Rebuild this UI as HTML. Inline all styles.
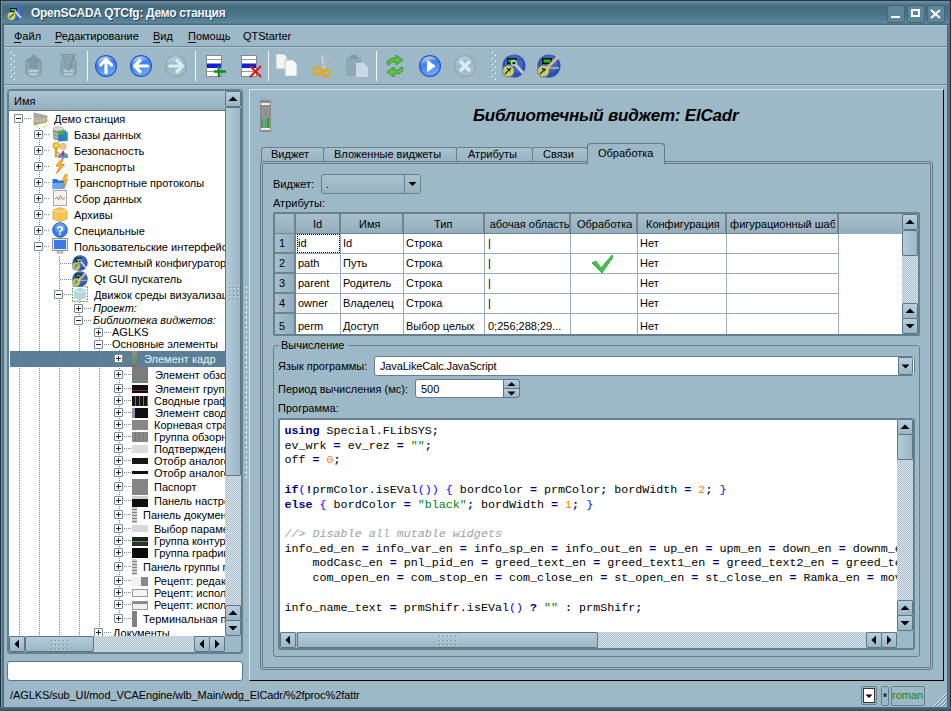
<!DOCTYPE html><html><head><meta charset="utf-8"><style>
*{margin:0;padding:0;box-sizing:border-box}
html,body{width:951px;height:711px;overflow:hidden;background:#9db8c6;font:11px 'Liberation Sans', sans-serif;color:#000}
.a{position:absolute}
.t{position:absolute;white-space:pre;line-height:13px;font:11px/13px 'Liberation Sans', sans-serif}
.m{position:absolute;white-space:pre;font:11.7px/14.72px 'Liberation Mono', monospace}
.chk{background-color:#c4d4de;background-image:repeating-conic-gradient(#a6bccb 0 25%, #dfe8ee 0 50%);background-size:2px 2px}
.btn{background:linear-gradient(#b8d0de,#9ab5c5);border:1px solid #5d7686;border-radius:2px}
.hdl{background:linear-gradient(90deg,#b4ccda,#9cb6c6);border:1px solid #5d7686;border-radius:2px}
.hdlh{background:linear-gradient(#b4ccda,#9cb6c6);border:1px solid #5d7686;border-radius:2px}
.frame{border:2px solid #667e8e;border-radius:3px}
</style></head><body>
<div class="a" style="left:0px;top:0px;width:951px;height:25px;background:linear-gradient(#25343e 0 1px,#6a8ea2 1px 2px,#587f94 3px,#466b7f 7px,#4d7388 15px,#5a87a0 23px,#4a6b7e 24px)"></div>
<div class="a" style="left:0px;top:0px;width:1px;height:711px;background:#23333d"></div>
<div class="a" style="left:1px;top:1px;width:1px;height:710px;background:#6c92a8"></div>
<div class="a" style="left:2px;top:25px;width:1px;height:682px;background:#567c92"></div>
<div class="a" style="left:3px;top:25px;width:1px;height:682px;background:#466b80"></div>
<div class="a" style="left:947px;top:25px;width:1px;height:682px;background:#466b80"></div>
<div class="a" style="left:948px;top:25px;width:1px;height:682px;background:#567c92"></div>
<div class="a" style="left:949px;top:1px;width:1px;height:710px;background:#4a6f85"></div>
<div class="a" style="left:950px;top:0px;width:1px;height:711px;background:#23333d"></div>
<div class="a" style="left:0px;top:707px;width:951px;height:4px;background:linear-gradient(#4f7489,#3d6074 2px,#2f4c5e)"></div>
<svg class="a" style="left:7px;top:5px" width="16" height="16" viewBox="0 0 16 16">
<circle cx="8" cy="8" r="7.5" fill="#3560c0"/><circle cx="8" cy="6" r="6" fill="#4a7ad8" opacity=".6"/>
<rect x="3" y="3" width="7" height="4" fill="#111"/><rect x="4" y="4" width="5" height="2" fill="#2c2"/>
<circle cx="4.5" cy="11" r="4" fill="#c8d070"/><path d="M2 13 L7 9" stroke="#222" stroke-width="1"/>
<path d="M8 6 L14 13" stroke="#ccc" stroke-width="2.2"/></svg>
<div class="a" style="left:31px;top:6px;white-space:pre;font:bold 12px/14px 'Liberation Sans', sans-serif;letter-spacing:-0.3px;color:#f4f8fa;text-shadow:1px 1px 0 #2a4050">OpenSCADA QTCfg: Демо станция</div>
<div class="a" style="left:887px;top:5px;width:18px;height:18px;background:#5f8599;border:1px solid #44677b;border-radius:3px"></div>
<div class="a" style="left:907px;top:5px;width:18px;height:18px;background:#5f8599;border:1px solid #44677b;border-radius:3px"></div>
<div class="a" style="left:927px;top:5px;width:18px;height:18px;background:#5f8599;border:1px solid #44677b;border-radius:3px"></div>
<div class="a" style="left:891px;top:16px;width:9px;height:2px;background:#fff"></div>
<div class="a" style="left:911px;top:9px;width:9px;height:8px;border:2px solid #fff;border-top-width:2px"></div>
<svg class="a" style="left:930px;top:9px" width="11" height="10"><path d="M1 1 L10 9 M10 1 L1 9" stroke="#fff" stroke-width="2"/></svg>
<div class="a" style="left:4px;top:25px;width:943px;height:1px;background:#b4cad6"></div>
<div class="t" style="left:14px;top:30px;">Файл</div>
<div class="t" style="left:55px;top:30px;">Редактирование</div>
<div class="t" style="left:153px;top:30px;">Вид</div>
<div class="t" style="left:188px;top:30px;">Помощь</div>
<div class="t" style="left:243px;top:30px;">QTStarter</div>
<div class="a" style="left:14px;top:42px;width:7px;height:1px;background:#000"></div>
<div class="a" style="left:55px;top:42px;width:7px;height:1px;background:#000"></div>
<div class="a" style="left:153px;top:42px;width:7px;height:1px;background:#000"></div>
<div class="a" style="left:188px;top:42px;width:8px;height:1px;background:#000"></div>
<div class="a" style="left:4px;top:46px;width:943px;height:1px;background:#72889a"></div>
<div class="a" style="left:4px;top:47px;width:943px;height:1px;background:#b2c8d4"></div>
<div class="a" style="left:10px;top:51px;width:2px;height:2px;background:#cde8f6"></div>
<div class="a" style="left:10px;top:51px;width:1px;height:1px;background:#7a92a2"></div>
<div class="a" style="left:13px;top:54px;width:2px;height:2px;background:#cde8f6"></div>
<div class="a" style="left:13px;top:54px;width:1px;height:1px;background:#7a92a2"></div>
<div class="a" style="left:10px;top:57px;width:2px;height:2px;background:#cde8f6"></div>
<div class="a" style="left:10px;top:57px;width:1px;height:1px;background:#7a92a2"></div>
<div class="a" style="left:13px;top:60px;width:2px;height:2px;background:#cde8f6"></div>
<div class="a" style="left:13px;top:60px;width:1px;height:1px;background:#7a92a2"></div>
<div class="a" style="left:10px;top:63px;width:2px;height:2px;background:#cde8f6"></div>
<div class="a" style="left:10px;top:63px;width:1px;height:1px;background:#7a92a2"></div>
<div class="a" style="left:13px;top:66px;width:2px;height:2px;background:#cde8f6"></div>
<div class="a" style="left:13px;top:66px;width:1px;height:1px;background:#7a92a2"></div>
<div class="a" style="left:10px;top:69px;width:2px;height:2px;background:#cde8f6"></div>
<div class="a" style="left:10px;top:69px;width:1px;height:1px;background:#7a92a2"></div>
<div class="a" style="left:13px;top:72px;width:2px;height:2px;background:#cde8f6"></div>
<div class="a" style="left:13px;top:72px;width:1px;height:1px;background:#7a92a2"></div>
<div class="a" style="left:10px;top:75px;width:2px;height:2px;background:#cde8f6"></div>
<div class="a" style="left:10px;top:75px;width:1px;height:1px;background:#7a92a2"></div>
<div class="a" style="left:13px;top:78px;width:2px;height:2px;background:#cde8f6"></div>
<div class="a" style="left:13px;top:78px;width:1px;height:1px;background:#7a92a2"></div>
<div class="a" style="left:491px;top:51px;width:2px;height:2px;background:#cde8f6"></div>
<div class="a" style="left:491px;top:51px;width:1px;height:1px;background:#7a92a2"></div>
<div class="a" style="left:494px;top:54px;width:2px;height:2px;background:#cde8f6"></div>
<div class="a" style="left:494px;top:54px;width:1px;height:1px;background:#7a92a2"></div>
<div class="a" style="left:491px;top:57px;width:2px;height:2px;background:#cde8f6"></div>
<div class="a" style="left:491px;top:57px;width:1px;height:1px;background:#7a92a2"></div>
<div class="a" style="left:494px;top:60px;width:2px;height:2px;background:#cde8f6"></div>
<div class="a" style="left:494px;top:60px;width:1px;height:1px;background:#7a92a2"></div>
<div class="a" style="left:491px;top:63px;width:2px;height:2px;background:#cde8f6"></div>
<div class="a" style="left:491px;top:63px;width:1px;height:1px;background:#7a92a2"></div>
<div class="a" style="left:494px;top:66px;width:2px;height:2px;background:#cde8f6"></div>
<div class="a" style="left:494px;top:66px;width:1px;height:1px;background:#7a92a2"></div>
<div class="a" style="left:491px;top:69px;width:2px;height:2px;background:#cde8f6"></div>
<div class="a" style="left:491px;top:69px;width:1px;height:1px;background:#7a92a2"></div>
<div class="a" style="left:494px;top:72px;width:2px;height:2px;background:#cde8f6"></div>
<div class="a" style="left:494px;top:72px;width:1px;height:1px;background:#7a92a2"></div>
<div class="a" style="left:491px;top:75px;width:2px;height:2px;background:#cde8f6"></div>
<div class="a" style="left:491px;top:75px;width:1px;height:1px;background:#7a92a2"></div>
<div class="a" style="left:494px;top:78px;width:2px;height:2px;background:#cde8f6"></div>
<div class="a" style="left:494px;top:78px;width:1px;height:1px;background:#7a92a2"></div>
<div class="a" style="left:87px;top:51px;width:1px;height:30px;background:#f0f6fa"></div>
<div class="a" style="left:195px;top:51px;width:1px;height:30px;background:#f0f6fa"></div>
<div class="a" style="left:268px;top:51px;width:1px;height:30px;background:#f0f6fa"></div>
<div class="a" style="left:376px;top:51px;width:1px;height:30px;background:#f0f6fa"></div>
<div class="a" style="left:4px;top:84px;width:943px;height:1px;background:#72889a"></div>
<div class="a" style="left:4px;top:85px;width:943px;height:1px;background:#b2c8d4"></div>
<svg class="a" style="left:25px;top:54px" width="17" height="24" viewBox="0 0 17 24"><path d="M1 7 L1 19 C1 23.5 16 23.5 16 19 L16 7 C16 3.5 1 3.5 1 7 Z" fill="#93abb8" stroke="#7a92a0" stroke-width="1"/>
<path d="M1.5 11 C3 14 14 14 15.5 11" fill="none" stroke="#7e96a4" stroke-width="1"/>
<path d="M1.5 15 C3 18 14 18 15.5 15" fill="none" stroke="#7e96a4" stroke-width="1"/>
<ellipse cx="8.5" cy="16.5" rx="5.5" ry="1.6" fill="#b4ccd8"/><ellipse cx="8.5" cy="20.5" rx="5" ry="1.4" fill="#b0c8d4"/>
<path d="M8.5 0.5 L15.5 8 L12 8 L12 15 L5 15 L5 8 L1.5 8 Z" fill="#8199a7" stroke="#7890a0" stroke-width=".6"/></svg>
<svg class="a" style="left:60px;top:54px" width="17" height="24" viewBox="0 0 17 24"><path d="M1 7 L1 19 C1 23.5 16 23.5 16 19 L16 7 C16 3.5 1 3.5 1 7 Z" fill="#93abb8" stroke="#7a92a0" stroke-width="1"/>
<path d="M1.5 11 C3 14 14 14 15.5 11" fill="none" stroke="#7e96a4" stroke-width="1"/>
<path d="M1.5 15 C3 18 14 18 15.5 15" fill="none" stroke="#7e96a4" stroke-width="1"/>
<ellipse cx="8.5" cy="16.5" rx="5.5" ry="1.6" fill="#b4ccd8"/><ellipse cx="8.5" cy="20.5" rx="5" ry="1.4" fill="#b0c8d4"/>
<path d="M1 0.5 L16 0.5 L12 7 L12 13 L8.5 17 L5 13 L5 7 Z" fill="#8aa2b0" stroke="#7890a0" stroke-width=".6"/><path d="M14 2 L9 16" stroke="#6f8794" stroke-width="1"/></svg>
<svg class="a" style="left:94px;top:54px" width="24" height="24" viewBox="0 0 24 24">
<defs><linearGradient id="g1" x1="0" y1="0" x2="0.3" y2="1"><stop offset="0" stop-color="#f0f6ff"/><stop offset=".45" stop-color="#3f7fea"/><stop offset="1" stop-color="#6ea6fa"/></linearGradient></defs>
<circle cx="12" cy="12" r="11" fill="#2456c8"/><circle cx="12" cy="12" r="9.8" fill="url(#g1)"/><path d="M12 18.5 L12 6 M6.5 11 L12 5.5 L17.5 11" fill="none" stroke="#ffffff" stroke-width="3.2" stroke-linecap="round" stroke-linejoin="round"/></svg>
<svg class="a" style="left:129px;top:54px" width="24" height="24" viewBox="0 0 24 24">
<defs><linearGradient id="g2" x1="0" y1="0" x2="0.3" y2="1"><stop offset="0" stop-color="#f0f6ff"/><stop offset=".45" stop-color="#3f7fea"/><stop offset="1" stop-color="#6ea6fa"/></linearGradient></defs>
<circle cx="12" cy="12" r="11" fill="#2456c8"/><circle cx="12" cy="12" r="9.8" fill="url(#g2)"/><path d="M18.5 12 L6 12 M11 6.5 L5.5 12 L11 17.5" fill="none" stroke="#ffffff" stroke-width="3.2" stroke-linecap="round" stroke-linejoin="round"/></svg>
<svg class="a" style="left:164px;top:54px" width="24" height="24" viewBox="0 0 24 24">
<defs><linearGradient id="g3" x1="0" y1="0" x2="0.3" y2="1"><stop offset="0" stop-color="#c4d8e2"/><stop offset=".5" stop-color="#9fb6c3"/><stop offset="1" stop-color="#a9c0cc"/></linearGradient></defs>
<circle cx="12" cy="12" r="11" fill="#8ea5b2"/><circle cx="12" cy="12" r="9.8" fill="url(#g3)"/><path d="M5.5 12 L18 12 M13 6.5 L18.5 12 L13 17.5" fill="none" stroke="#d8eef8" stroke-width="3.2" stroke-linecap="round" stroke-linejoin="round"/></svg>
<svg class="a" style="left:418px;top:54px" width="24" height="24" viewBox="0 0 24 24">
<defs><linearGradient id="g4" x1="0" y1="0" x2="0.3" y2="1"><stop offset="0" stop-color="#f0f6ff"/><stop offset=".45" stop-color="#3f7fea"/><stop offset="1" stop-color="#6ea6fa"/></linearGradient></defs>
<circle cx="12" cy="12" r="11" fill="#2456c8"/><circle cx="12" cy="12" r="9.8" fill="url(#g4)"/><path d="M9.5 6.5 L17 12 L9.5 17.5 Z" fill="#ffffff" stroke="#ffffff" stroke-width="1" stroke-linejoin="round"/></svg>
<svg class="a" style="left:453px;top:54px" width="24" height="24" viewBox="0 0 24 24">
<defs><linearGradient id="g5" x1="0" y1="0" x2="0.3" y2="1"><stop offset="0" stop-color="#c4d8e2"/><stop offset=".5" stop-color="#9fb6c3"/><stop offset="1" stop-color="#a9c0cc"/></linearGradient></defs>
<circle cx="12" cy="12" r="11" fill="#8ea5b2"/><circle cx="12" cy="12" r="9.8" fill="url(#g5)"/><path d="M8 8 L16 16 M16 8 L8 16" stroke="#d8eef8" stroke-width="3.4" stroke-linecap="round"/></svg>
<svg class="a" style="left:206px;top:55px" width="22" height="23" viewBox="0 0 22 23">
<rect x="0.5" y="0.5" width="15" height="21" fill="#fff" stroke="#888"/>
<rect x="1" y="4" width="14" height="1" fill="#999"/><rect x="1" y="8" width="14" height="1" fill="#999"/>
<rect x="1" y="9" width="14" height="4" fill="#1020e0"/><rect x="1" y="16" width="14" height="1" fill="#999"/><path d="M13 11 L13 22 M8 16.5 L20 16.5" stroke="#108a20" stroke-width="2.6"/></svg>
<svg class="a" style="left:241px;top:55px" width="22" height="23" viewBox="0 0 22 23">
<rect x="0.5" y="0.5" width="15" height="21" fill="#fff" stroke="#888"/>
<rect x="1" y="4" width="14" height="1" fill="#999"/><rect x="1" y="8" width="14" height="1" fill="#999"/>
<rect x="1" y="9" width="14" height="4" fill="#1020e0"/><rect x="1" y="16" width="14" height="1" fill="#999"/><path d="M9 11 L20 22 M20 11 L9 22" stroke="#e01818" stroke-width="2.2"/></svg>
<svg class="a" style="left:275px;top:54px" width="24" height="24" viewBox="0 0 24 24">
<path d="M1 0 L9 0 L12 3 L12 15 L1 15 Z" fill="#f4f4f4" stroke="#b8b8b8" stroke-width=".8"/>
<path d="M10 6 L18 6 L22 10 L22 22 L10 22 Z" fill="#f8f8f8" stroke="#b8b8b8" stroke-width=".8"/></svg>
<svg class="a" style="left:311px;top:54px" width="22" height="24" viewBox="0 0 22 24">
<path d="M11 1 L13 15" stroke="#d0d0d0" stroke-width="2"/><path d="M20 2 L9 14" stroke="#b8b8b8" stroke-width="2"/>
<circle cx="6" cy="17" r="3.6" fill="none" stroke="#e8a800" stroke-width="2.2"/><circle cx="15" cy="19" r="3.6" fill="none" stroke="#e8a800" stroke-width="2.2"/></svg>
<svg class="a" style="left:345px;top:54px" width="24" height="24" viewBox="0 0 24 24">
<rect x="1" y="3" width="15" height="19" rx="2" fill="#8ea8b6"/><rect x="5" y="1" width="7" height="4" rx="1" fill="#7e98a6"/>
<path d="M11 9 L19 9 L23 13 L23 23 L11 23 Z" fill="#c8dae4"/></svg>
<svg class="a" style="left:383px;top:54px" width="24" height="24" viewBox="0 0 24 24">
<path d="M4 10 C4 5 8 4 13 4 L13 1 L20 6 L13 11 L13 8 C9 8 7 8 6 11 Z" fill="#60c040" stroke="#2a8a20" stroke-width=".8"/>
<path d="M20 14 C20 19 16 20 11 20 L11 23 L4 18 L11 13 L11 16 C15 16 17 16 18 13 Z" fill="#60c040" stroke="#2a8a20" stroke-width=".8"/></svg>
<svg class="a" style="left:502px;top:54px" width="24" height="24" viewBox="0 0 24 24">
<circle cx="12" cy="12" r="11.5" fill="#2d50b8"/><circle cx="12" cy="10" r="9" fill="#4a78d8" opacity=".55"/>
<rect x="5" y="4" width="10" height="6" fill="#111"/><rect x="6.5" y="5.5" width="7" height="3" fill="#20c020"/>
<circle cx="6.5" cy="17" r="6" fill="#c4cc70" stroke="#333" stroke-width=".5"/><path d="M3 20 L9 14 M5 14 L8 17" stroke="#222" stroke-width="1.2"/><path d="M13 10 L21 19" stroke="#c8c8c8" stroke-width="3"/><circle cx="12" cy="9" r="2.5" fill="none" stroke="#c8c8c8" stroke-width="1.5"/></svg>
<svg class="a" style="left:537px;top:54px" width="24" height="24" viewBox="0 0 24 24">
<circle cx="12" cy="12" r="11.5" fill="#2d50b8"/><circle cx="12" cy="10" r="9" fill="#4a78d8" opacity=".55"/>
<rect x="5" y="4" width="10" height="6" fill="#111"/><rect x="6.5" y="5.5" width="7" height="3" fill="#20c020"/>
<circle cx="6.5" cy="17" r="6" fill="#c4cc70" stroke="#333" stroke-width=".5"/><path d="M3 20 L9 14 M5 14 L8 17" stroke="#222" stroke-width="1.2"/><path d="M9 15 L21 3" stroke="#d8b890" stroke-width="3"/><path d="M9 14 L22 14" stroke="#e0e060" stroke-width="1.2"/></svg>
<div class="a" style="left:7px;top:89px;width:236px;height:565px;border:2px solid #667e8e;border-radius:4px;background:#9db8c6"></div>
<div class="a" style="left:9px;top:91px;width:216px;height:20px;background:linear-gradient(#adc6d4,#93adbd);border-bottom:1px solid #5d7686"></div>
<div class="t" style="left:14px;top:95px;">Имя</div>
<div class="a" style="left:9px;top:111px;width:216px;height:525px;background:#fff"></div>
<div class="a" style="left:225px;top:91px;width:16px;height:545px;background:#9db8c6"></div>
<div class="a" style="left:225px;top:476px;width:16px;height:129px;"></div>
<div class="a chk" style="left:225px;top:476px;width:16px;height:129px"></div>
<div class="a btn" style="left:225px;top:91px;width:16px;height:16px"></div>
<svg class="a" style="left:225px;top:91px" width="16" height="16"><path d="M3.5 10.0 L12.5 10.0 L8.0 5.5 Z" fill="#000"/></svg>
<div class="a hdl" style="left:225px;top:107px;width:16px;height:369px"></div>
<div class="a" style="left:229px;top:283px;width:1px;height:1px;background:#6c8494"></div>
<div class="a" style="left:230px;top:284px;width:1px;height:1px;background:#d0e2ec"></div>
<div class="a" style="left:233px;top:283px;width:1px;height:1px;background:#6c8494"></div>
<div class="a" style="left:234px;top:284px;width:1px;height:1px;background:#d0e2ec"></div>
<div class="a" style="left:237px;top:283px;width:1px;height:1px;background:#6c8494"></div>
<div class="a" style="left:238px;top:284px;width:1px;height:1px;background:#d0e2ec"></div>
<div class="a" style="left:229px;top:287px;width:1px;height:1px;background:#6c8494"></div>
<div class="a" style="left:230px;top:288px;width:1px;height:1px;background:#d0e2ec"></div>
<div class="a" style="left:233px;top:287px;width:1px;height:1px;background:#6c8494"></div>
<div class="a" style="left:234px;top:288px;width:1px;height:1px;background:#d0e2ec"></div>
<div class="a" style="left:237px;top:287px;width:1px;height:1px;background:#6c8494"></div>
<div class="a" style="left:238px;top:288px;width:1px;height:1px;background:#d0e2ec"></div>
<div class="a" style="left:229px;top:291px;width:1px;height:1px;background:#6c8494"></div>
<div class="a" style="left:230px;top:292px;width:1px;height:1px;background:#d0e2ec"></div>
<div class="a" style="left:233px;top:291px;width:1px;height:1px;background:#6c8494"></div>
<div class="a" style="left:234px;top:292px;width:1px;height:1px;background:#d0e2ec"></div>
<div class="a" style="left:237px;top:291px;width:1px;height:1px;background:#6c8494"></div>
<div class="a" style="left:238px;top:292px;width:1px;height:1px;background:#d0e2ec"></div>
<div class="a" style="left:229px;top:295px;width:1px;height:1px;background:#6c8494"></div>
<div class="a" style="left:230px;top:296px;width:1px;height:1px;background:#d0e2ec"></div>
<div class="a" style="left:233px;top:295px;width:1px;height:1px;background:#6c8494"></div>
<div class="a" style="left:234px;top:296px;width:1px;height:1px;background:#d0e2ec"></div>
<div class="a" style="left:237px;top:295px;width:1px;height:1px;background:#6c8494"></div>
<div class="a" style="left:238px;top:296px;width:1px;height:1px;background:#d0e2ec"></div>
<div class="a" style="left:229px;top:299px;width:1px;height:1px;background:#6c8494"></div>
<div class="a" style="left:230px;top:300px;width:1px;height:1px;background:#d0e2ec"></div>
<div class="a" style="left:233px;top:299px;width:1px;height:1px;background:#6c8494"></div>
<div class="a" style="left:234px;top:300px;width:1px;height:1px;background:#d0e2ec"></div>
<div class="a" style="left:237px;top:299px;width:1px;height:1px;background:#6c8494"></div>
<div class="a" style="left:238px;top:300px;width:1px;height:1px;background:#d0e2ec"></div>
<div class="a btn" style="left:225px;top:605px;width:16px;height:16px"></div>
<svg class="a" style="left:225px;top:605px" width="16" height="16"><path d="M3.5 10.0 L12.5 10.0 L8.0 5.5 Z" fill="#000"/></svg>
<div class="a btn" style="left:225px;top:620px;width:16px;height:16px"></div>
<svg class="a" style="left:225px;top:620px" width="16" height="16"><path d="M3.5 6.0 L12.5 6.0 L8.0 10.5 Z" fill="#000"/></svg>
<div class="a" style="left:9px;top:636px;width:216px;height:16px;background:#9db8c6"></div>
<div class="a chk" style="left:94px;top:636px;width:100px;height:16px"></div>
<div class="a btn" style="left:9px;top:636px;width:16px;height:16px"></div>
<svg class="a" style="left:9px;top:636px" width="16" height="16"><path d="M10.0 3.5 L10.0 12.5 L5.5 8.0 Z" fill="#000"/></svg>
<div class="a hdlh" style="left:25px;top:636px;width:69px;height:16px"></div>
<div class="a" style="left:51px;top:640px;width:1px;height:1px;background:#6c8494"></div>
<div class="a" style="left:52px;top:641px;width:1px;height:1px;background:#d0e2ec"></div>
<div class="a" style="left:55px;top:640px;width:1px;height:1px;background:#6c8494"></div>
<div class="a" style="left:56px;top:641px;width:1px;height:1px;background:#d0e2ec"></div>
<div class="a" style="left:59px;top:640px;width:1px;height:1px;background:#6c8494"></div>
<div class="a" style="left:60px;top:641px;width:1px;height:1px;background:#d0e2ec"></div>
<div class="a" style="left:63px;top:640px;width:1px;height:1px;background:#6c8494"></div>
<div class="a" style="left:64px;top:641px;width:1px;height:1px;background:#d0e2ec"></div>
<div class="a" style="left:67px;top:640px;width:1px;height:1px;background:#6c8494"></div>
<div class="a" style="left:68px;top:641px;width:1px;height:1px;background:#d0e2ec"></div>
<div class="a" style="left:51px;top:644px;width:1px;height:1px;background:#6c8494"></div>
<div class="a" style="left:52px;top:645px;width:1px;height:1px;background:#d0e2ec"></div>
<div class="a" style="left:55px;top:644px;width:1px;height:1px;background:#6c8494"></div>
<div class="a" style="left:56px;top:645px;width:1px;height:1px;background:#d0e2ec"></div>
<div class="a" style="left:59px;top:644px;width:1px;height:1px;background:#6c8494"></div>
<div class="a" style="left:60px;top:645px;width:1px;height:1px;background:#d0e2ec"></div>
<div class="a" style="left:63px;top:644px;width:1px;height:1px;background:#6c8494"></div>
<div class="a" style="left:64px;top:645px;width:1px;height:1px;background:#d0e2ec"></div>
<div class="a" style="left:67px;top:644px;width:1px;height:1px;background:#6c8494"></div>
<div class="a" style="left:68px;top:645px;width:1px;height:1px;background:#d0e2ec"></div>
<div class="a" style="left:51px;top:648px;width:1px;height:1px;background:#6c8494"></div>
<div class="a" style="left:52px;top:649px;width:1px;height:1px;background:#d0e2ec"></div>
<div class="a" style="left:55px;top:648px;width:1px;height:1px;background:#6c8494"></div>
<div class="a" style="left:56px;top:649px;width:1px;height:1px;background:#d0e2ec"></div>
<div class="a" style="left:59px;top:648px;width:1px;height:1px;background:#6c8494"></div>
<div class="a" style="left:60px;top:649px;width:1px;height:1px;background:#d0e2ec"></div>
<div class="a" style="left:63px;top:648px;width:1px;height:1px;background:#6c8494"></div>
<div class="a" style="left:64px;top:649px;width:1px;height:1px;background:#d0e2ec"></div>
<div class="a" style="left:67px;top:648px;width:1px;height:1px;background:#6c8494"></div>
<div class="a" style="left:68px;top:649px;width:1px;height:1px;background:#d0e2ec"></div>
<div class="a btn" style="left:194px;top:636px;width:16px;height:16px"></div>
<svg class="a" style="left:194px;top:636px" width="16" height="16"><path d="M10.0 3.5 L10.0 12.5 L5.5 8.0 Z" fill="#000"/></svg>
<div class="a btn" style="left:209px;top:636px;width:16px;height:16px"></div>
<svg class="a" style="left:209px;top:636px" width="16" height="16"><path d="M6.0 3.5 L6.0 12.5 L10.5 8.0 Z" fill="#000"/></svg>
<div class="a" style="left:0;top:0;width:951px;height:711px;clip-path:inset(111px 726px 75px 9px)">
<div class="a" style="left:10px;top:351px;width:215px;height:16px;background:#5a7f96"></div>
<div class="a" style="left:19px;top:124px;width:1px;height:512px;background:repeating-linear-gradient(#6f8494 0 1px,transparent 1px 2px)"></div>
<div class="a" style="left:39px;top:128px;width:1px;height:508px;background:repeating-linear-gradient(#6f8494 0 1px,transparent 1px 2px)"></div>
<div class="a" style="left:59px;top:256px;width:1px;height:380px;background:repeating-linear-gradient(#6f8494 0 1px,transparent 1px 2px)"></div>
<div class="a" style="left:79px;top:300px;width:1px;height:336px;background:repeating-linear-gradient(#6f8494 0 1px,transparent 1px 2px)"></div>
<div class="a" style="left:99px;top:326px;width:1px;height:310px;background:repeating-linear-gradient(#6f8494 0 1px,transparent 1px 2px)"></div>
<div class="a" style="left:119px;top:350px;width:1px;height:270px;background:repeating-linear-gradient(#6f8494 0 1px,transparent 1px 2px)"></div>
<div class="a" style="left:14px;top:114px;width:9px;height:9px;border:1px solid #7a8a94;border-radius:1px;background:#fff"></div>
<div class="a" style="left:16px;top:118px;width:5px;height:1px;background:#202020"></div>
<div class="a" style="left:24px;top:118px;width:7px;height:1px;background:repeating-linear-gradient(90deg,#6f8494 0 1px,transparent 1px 2px)"></div>
<div class="t" style="left:54px;top:113px;">Демо станция</div>
<svg class="a" style="left:33px;top:112px" width="16" height="16" viewBox="0 0 16 16"><path d="M1 1 L14 4 L14 10 L1 13 Z" fill="#a8a8a8" stroke="#888" stroke-width=".6"/><text x="7.5" y="9.5" font-size="5" font-family="Liberation Sans" fill="#e8e050" text-anchor="middle">AGLKS</text><path d="M3 13 L3 15 L6 15 M10 15 L13 15 L13 13" stroke="#e8e050" stroke-width="1" fill="none"/></svg>
<div class="a" style="left:34px;top:130px;width:9px;height:9px;border:1px solid #7a8a94;border-radius:1px;background:#fff"></div>
<div class="a" style="left:36px;top:134px;width:5px;height:1px;background:#202020"></div>
<div class="a" style="left:38px;top:132px;width:1px;height:5px;background:#202020"></div>
<div class="a" style="left:44px;top:134px;width:6px;height:1px;background:repeating-linear-gradient(90deg,#6f8494 0 1px,transparent 1px 2px)"></div>
<svg class="a" style="left:52px;top:126px" width="16" height="16" viewBox="0 0 16 16"><path d="M1 3 L1 12 C1 15 12 15 12 12 L12 3 Z" fill="#9a9a9a"/><ellipse cx="6.5" cy="3" rx="5.5" ry="2.2" fill="#d8d8d8" stroke="#888" stroke-width=".5"/><path d="M1 6.5 C2 9 11 9 12 6.5 M1 9.5 C2 12 11 12 12 9.5" fill="none" stroke="#c8c8c8" stroke-width="1"/><path d="M6 5 L14 4 L14 11 L6 12 Z" fill="#48b048"/><path d="M6 9 L15 8 L15 15 L6 15.5 Z" fill="#3a78c8"/><path d="M12 5 L16 6 L16 15 L12 15 Z" fill="#2a88b0" opacity=".8"/></svg>
<div class="t" style="left:74px;top:129px;">Базы данных</div>
<div class="a" style="left:34px;top:146px;width:9px;height:9px;border:1px solid #7a8a94;border-radius:1px;background:#fff"></div>
<div class="a" style="left:36px;top:150px;width:5px;height:1px;background:#202020"></div>
<div class="a" style="left:38px;top:148px;width:1px;height:5px;background:#202020"></div>
<div class="a" style="left:44px;top:150px;width:6px;height:1px;background:repeating-linear-gradient(90deg,#6f8494 0 1px,transparent 1px 2px)"></div>
<svg class="a" style="left:52px;top:142px" width="16" height="16" viewBox="0 0 16 16"><circle cx="11" cy="4.5" r="3.3" fill="#f0c890" stroke="#c89050" stroke-width=".5"/><path d="M6 15.5 C6 9 16 9 16 15.5 Z" fill="#5a90e0" stroke="#3a60b0" stroke-width=".5"/><rect x="10.3" y="9" width="1.6" height="5" fill="#e02020"/><circle cx="4" cy="3.5" r="3.2" fill="#f8c830" stroke="#c08a10" stroke-width=".6"/><circle cx="4" cy="3.5" r="1" fill="#fff6c0"/><path d="M3 6 L5 6 L5 15 L3 15 Z" fill="#f0b020" stroke="#c08a10" stroke-width=".5"/><rect x="5" y="10" width="2" height="1.3" fill="#e0a010"/></svg>
<div class="t" style="left:74px;top:145px;">Безопасность</div>
<div class="a" style="left:34px;top:162px;width:9px;height:9px;border:1px solid #7a8a94;border-radius:1px;background:#fff"></div>
<div class="a" style="left:36px;top:166px;width:5px;height:1px;background:#202020"></div>
<div class="a" style="left:38px;top:164px;width:1px;height:5px;background:#202020"></div>
<div class="a" style="left:44px;top:166px;width:6px;height:1px;background:repeating-linear-gradient(90deg,#6f8494 0 1px,transparent 1px 2px)"></div>
<svg class="a" style="left:52px;top:158px" width="16" height="16" viewBox="0 0 16 16"><path d="M10 0.5 L4 8 L8 8 L4.5 15.5 L12.5 6.5 L8.5 6.5 L11.5 0.5 Z" fill="#f8d020" stroke="#e06010" stroke-width=".8" stroke-linejoin="round"/></svg>
<div class="t" style="left:74px;top:161px;">Транспорты</div>
<div class="a" style="left:34px;top:178px;width:9px;height:9px;border:1px solid #7a8a94;border-radius:1px;background:#fff"></div>
<div class="a" style="left:36px;top:182px;width:5px;height:1px;background:#202020"></div>
<div class="a" style="left:38px;top:180px;width:1px;height:5px;background:#202020"></div>
<div class="a" style="left:44px;top:182px;width:6px;height:1px;background:repeating-linear-gradient(90deg,#6f8494 0 1px,transparent 1px 2px)"></div>
<svg class="a" style="left:52px;top:174px" width="16" height="16" viewBox="0 0 16 16"><path d="M0.5 5 L5 5 L6 6.5 L12 6.5 L12 15 L0.5 15 Z" fill="#2a70d8"/><path d="M1 9 L15 8.5 L12.5 15 L0.5 15 Z" fill="#68a8f8"/><path d="M13 0.5 L10 7 L12.5 7 L10.5 14 L16 5.5 L13.5 5.5 L15.5 0.5 Z" fill="#f8c020" stroke="#e07010" stroke-width=".6"/></svg>
<div class="t" style="left:74px;top:177px;">Транспортные протоколы</div>
<div class="a" style="left:34px;top:194px;width:9px;height:9px;border:1px solid #7a8a94;border-radius:1px;background:#fff"></div>
<div class="a" style="left:36px;top:198px;width:5px;height:1px;background:#202020"></div>
<div class="a" style="left:38px;top:196px;width:1px;height:5px;background:#202020"></div>
<div class="a" style="left:44px;top:198px;width:6px;height:1px;background:repeating-linear-gradient(90deg,#6f8494 0 1px,transparent 1px 2px)"></div>
<svg class="a" style="left:52px;top:190px" width="16" height="16" viewBox="0 0 16 16"><rect x="1.5" y="0.5" width="13" height="15" fill="#f4f4f4" stroke="#a8a8a8"/><path d="M3 9 L5 7 L6.5 10 L8.5 5.5 L10.5 9.5 L13 7.5" fill="none" stroke="#e07070" stroke-width="1"/></svg>
<div class="t" style="left:74px;top:193px;">Сбор данных</div>
<div class="a" style="left:34px;top:210px;width:9px;height:9px;border:1px solid #7a8a94;border-radius:1px;background:#fff"></div>
<div class="a" style="left:36px;top:214px;width:5px;height:1px;background:#202020"></div>
<div class="a" style="left:38px;top:212px;width:1px;height:5px;background:#202020"></div>
<div class="a" style="left:44px;top:214px;width:6px;height:1px;background:repeating-linear-gradient(90deg,#6f8494 0 1px,transparent 1px 2px)"></div>
<svg class="a" style="left:52px;top:206px" width="16" height="16" viewBox="0 0 16 16"><path d="M1 4 L8 1.5 L15 4 L15 13 L8 15.5 L1 13 Z" fill="#f8c850" stroke="#c8902a" stroke-width=".6"/><path d="M1 4 L8 6.2 L15 4" fill="none" stroke="#fff0b8" stroke-width="1"/><path d="M8 6.2 L8 15.5" stroke="#e0a838" stroke-width=".6"/></svg>
<div class="t" style="left:74px;top:209px;">Архивы</div>
<div class="a" style="left:34px;top:226px;width:9px;height:9px;border:1px solid #7a8a94;border-radius:1px;background:#fff"></div>
<div class="a" style="left:36px;top:230px;width:5px;height:1px;background:#202020"></div>
<div class="a" style="left:38px;top:228px;width:1px;height:5px;background:#202020"></div>
<div class="a" style="left:44px;top:230px;width:6px;height:1px;background:repeating-linear-gradient(90deg,#6f8494 0 1px,transparent 1px 2px)"></div>
<svg class="a" style="left:52px;top:222px" width="16" height="16" viewBox="0 0 16 16"><circle cx="8" cy="8" r="7.5" fill="#3a78e8" stroke="#2a58c0" stroke-width=".6"/><circle cx="8" cy="6" r="5" fill="#90c0ff" opacity=".5"/><text x="8" y="12.5" font-size="12" font-weight="bold" font-family="Liberation Sans" fill="#fff" text-anchor="middle">?</text></svg>
<div class="t" style="left:74px;top:225px;">Специальные</div>
<div class="a" style="left:34px;top:242px;width:9px;height:9px;border:1px solid #7a8a94;border-radius:1px;background:#fff"></div>
<div class="a" style="left:36px;top:246px;width:5px;height:1px;background:#202020"></div>
<div class="a" style="left:44px;top:246px;width:6px;height:1px;background:repeating-linear-gradient(90deg,#6f8494 0 1px,transparent 1px 2px)"></div>
<svg class="a" style="left:52px;top:238px" width="16" height="16" viewBox="0 0 16 16"><rect x="0.5" y="0.5" width="15" height="12" fill="#e8e8e8" stroke="#909090"/><rect x="2" y="2" width="12" height="9" fill="#3a78e8"/><rect x="5" y="13" width="6" height="2.5" fill="#c8c8c8" stroke="#999" stroke-width=".5"/></svg>
<div class="t" style="left:74px;top:241px;">Пользовательские интерфейсы</div>
<div class="a" style="left:60px;top:263px;width:11px;height:1px;background:repeating-linear-gradient(90deg,#6f8494 0 1px,transparent 1px 2px)"></div>
<svg class="a" style="left:72px;top:255px" width="16" height="16" viewBox="0 0 24 24">
<circle cx="12" cy="12" r="11.5" fill="#2d50b8"/><circle cx="12" cy="10" r="9" fill="#4a78d8" opacity=".55"/>
<rect x="5" y="4" width="10" height="6" fill="#111"/><rect x="6.5" y="5.5" width="7" height="3" fill="#20c020"/>
<circle cx="6.5" cy="17" r="6" fill="#c4cc70" stroke="#333" stroke-width=".5"/><path d="M3 20 L9 14 M5 14 L8 17" stroke="#222" stroke-width="1.2"/><path d="M13 10 L21 19" stroke="#c8c8c8" stroke-width="3"/><circle cx="12" cy="9" r="2.5" fill="none" stroke="#c8c8c8" stroke-width="1.5"/></svg>
<div class="t" style="left:94px;top:257px;">Системный конфигуратор</div>
<div class="a" style="left:60px;top:279px;width:11px;height:1px;background:repeating-linear-gradient(90deg,#6f8494 0 1px,transparent 1px 2px)"></div>
<svg class="a" style="left:72px;top:271px" width="16" height="16" viewBox="0 0 24 24">
<circle cx="12" cy="12" r="11.5" fill="#2d50b8"/><circle cx="12" cy="10" r="9" fill="#4a78d8" opacity=".55"/>
<rect x="5" y="4" width="10" height="6" fill="#111"/><rect x="6.5" y="5.5" width="7" height="3" fill="#20c020"/>
<circle cx="6.5" cy="17" r="6" fill="#c4cc70" stroke="#333" stroke-width=".5"/><path d="M3 20 L9 14 M5 14 L8 17" stroke="#222" stroke-width="1.2"/><path d="M9 15 L21 3" stroke="#d8b890" stroke-width="3"/><path d="M9 14 L22 14" stroke="#e0e060" stroke-width="1.2"/></svg>
<div class="t" style="left:94px;top:273px;">Qt GUI пускатель</div>
<div class="a" style="left:54px;top:290px;width:9px;height:9px;border:1px solid #7a8a94;border-radius:1px;background:#fff"></div>
<div class="a" style="left:56px;top:294px;width:5px;height:1px;background:#202020"></div>
<div class="a" style="left:64px;top:294px;width:7px;height:1px;background:repeating-linear-gradient(90deg,#6f8494 0 1px,transparent 1px 2px)"></div>
<svg class="a" style="left:72px;top:286px" width="16" height="16" viewBox="0 0 16 16"><rect x="0.5" y="0.5" width="15" height="15" fill="none" stroke="#30a030" stroke-dasharray="1.5 1.5"/><path d="M2 4 L8 1.5 L14 4 L14 12 L8 14.5 L2 12 Z" fill="#b8d8e0"/><path d="M2 4 L8 6.5 L14 4" fill="none" stroke="#e0f0f4"/></svg>
<div class="t" style="left:94px;top:289px;">Движок среды визуализации</div>
<div class="a" style="left:74px;top:304px;width:9px;height:9px;border:1px solid #7a8a94;border-radius:1px;background:#fff"></div>
<div class="a" style="left:76px;top:308px;width:5px;height:1px;background:#202020"></div>
<div class="a" style="left:78px;top:306px;width:1px;height:5px;background:#202020"></div>
<div class="a" style="left:84px;top:308px;width:7px;height:1px;background:repeating-linear-gradient(90deg,#6f8494 0 1px,transparent 1px 2px)"></div>
<div class="t" style="left:93px;top:302px;font-style:italic">Проект:</div>
<div class="a" style="left:74px;top:316px;width:9px;height:9px;border:1px solid #7a8a94;border-radius:1px;background:#fff"></div>
<div class="a" style="left:76px;top:320px;width:5px;height:1px;background:#202020"></div>
<div class="a" style="left:84px;top:320px;width:7px;height:1px;background:repeating-linear-gradient(90deg,#6f8494 0 1px,transparent 1px 2px)"></div>
<div class="t" style="left:93px;top:314px;font-style:italic">Библиотека виджетов:</div>
<div class="a" style="left:94px;top:328px;width:9px;height:9px;border:1px solid #7a8a94;border-radius:1px;background:#fff"></div>
<div class="a" style="left:96px;top:332px;width:5px;height:1px;background:#202020"></div>
<div class="a" style="left:98px;top:330px;width:1px;height:5px;background:#202020"></div>
<div class="a" style="left:104px;top:332px;width:7px;height:1px;background:repeating-linear-gradient(90deg,#6f8494 0 1px,transparent 1px 2px)"></div>
<div class="t" style="left:112px;top:326px;">AGLKS</div>
<div class="a" style="left:94px;top:340px;width:9px;height:9px;border:1px solid #7a8a94;border-radius:1px;background:#fff"></div>
<div class="a" style="left:96px;top:344px;width:5px;height:1px;background:#202020"></div>
<div class="a" style="left:104px;top:344px;width:7px;height:1px;background:repeating-linear-gradient(90deg,#6f8494 0 1px,transparent 1px 2px)"></div>
<div class="t" style="left:112px;top:338px;">Основные элементы</div>
<div class="a" style="left:94px;top:628px;width:9px;height:9px;border:1px solid #7a8a94;border-radius:1px;background:#fff"></div>
<div class="a" style="left:96px;top:632px;width:5px;height:1px;background:#202020"></div>
<div class="a" style="left:98px;top:630px;width:1px;height:5px;background:#202020"></div>
<div class="a" style="left:104px;top:632px;width:7px;height:1px;background:repeating-linear-gradient(90deg,#6f8494 0 1px,transparent 1px 2px)"></div>
<div class="t" style="left:113px;top:627px;">Документы</div>
<div class="a" style="left:114px;top:354px;width:9px;height:9px;border:1px solid #7a8a94;border-radius:1px;background:#fff"></div>
<div class="a" style="left:116px;top:358px;width:5px;height:1px;background:#202020"></div>
<div class="a" style="left:118px;top:356px;width:1px;height:5px;background:#202020"></div>
<div class="a" style="left:124px;top:358px;width:7px;height:1px;background:repeating-linear-gradient(90deg,#6f8494 0 1px,transparent 1px 2px)"></div>
<div class="a" style="left:132px;top:351px;width:5px;height:16px;background:linear-gradient(#909090,#707070)"></div><div class="a" style="left:133px;top:357px;width:3px;height:7px;background:#40b040"></div>
<div class="a" style="left:144px;top:353px;width:81px;height:14px;overflow:hidden"><div class="t" style="left:0;top:0;color:#e8f0f4">Элемент кадр</div></div>
<div class="a" style="left:114px;top:370px;width:9px;height:9px;border:1px solid #7a8a94;border-radius:1px;background:#fff"></div>
<div class="a" style="left:116px;top:374px;width:5px;height:1px;background:#202020"></div>
<div class="a" style="left:118px;top:372px;width:1px;height:5px;background:#202020"></div>
<div class="a" style="left:124px;top:374px;width:7px;height:1px;background:repeating-linear-gradient(90deg,#6f8494 0 1px,transparent 1px 2px)"></div>
<div class="a" style="left:132px;top:367px;width:16px;height:16px;background:linear-gradient(#7c7c7c 0 13px,#60a060 13px 14px,#7c7c7c 14px)"></div>
<div class="a" style="left:155px;top:369px;width:70px;height:14px;overflow:hidden"><div class="t" style="left:0;top:0;">Элемент обзор</div></div>
<div class="a" style="left:114px;top:384px;width:9px;height:9px;border:1px solid #7a8a94;border-radius:1px;background:#fff"></div>
<div class="a" style="left:116px;top:388px;width:5px;height:1px;background:#202020"></div>
<div class="a" style="left:118px;top:386px;width:1px;height:5px;background:#202020"></div>
<div class="a" style="left:124px;top:388px;width:7px;height:1px;background:repeating-linear-gradient(90deg,#6f8494 0 1px,transparent 1px 2px)"></div>
<div class="a" style="left:132px;top:385px;width:16px;height:8px;background:linear-gradient(#101010 0 5px,#a02020 5px 6px,#101010 6px)"></div>
<div class="a" style="left:155px;top:383px;width:70px;height:14px;overflow:hidden"><div class="t" style="left:0;top:0;">Элемент группы</div></div>
<div class="a" style="left:114px;top:396px;width:9px;height:9px;border:1px solid #7a8a94;border-radius:1px;background:#fff"></div>
<div class="a" style="left:116px;top:400px;width:5px;height:1px;background:#202020"></div>
<div class="a" style="left:118px;top:398px;width:1px;height:5px;background:#202020"></div>
<div class="a" style="left:124px;top:400px;width:7px;height:1px;background:repeating-linear-gradient(90deg,#6f8494 0 1px,transparent 1px 2px)"></div>
<div class="a" style="left:132px;top:396px;width:16px;height:10px;background:repeating-linear-gradient(90deg,#151515 0 3px,#707070 3px 4px)"></div>
<div class="a" style="left:154px;top:395px;width:71px;height:14px;overflow:hidden"><div class="t" style="left:0;top:0;">Сводные графики</div></div>
<div class="a" style="left:114px;top:408px;width:9px;height:9px;border:1px solid #7a8a94;border-radius:1px;background:#fff"></div>
<div class="a" style="left:116px;top:412px;width:5px;height:1px;background:#202020"></div>
<div class="a" style="left:118px;top:410px;width:1px;height:5px;background:#202020"></div>
<div class="a" style="left:124px;top:412px;width:7px;height:1px;background:repeating-linear-gradient(90deg,#6f8494 0 1px,transparent 1px 2px)"></div>
<div class="a" style="left:132px;top:408px;width:16px;height:10px;background:linear-gradient(90deg,#9090b0 0 3px,#101010 3px)"></div>
<div class="a" style="left:155px;top:407px;width:70px;height:14px;overflow:hidden"><div class="t" style="left:0;top:0;">Элемент сводки</div></div>
<div class="a" style="left:114px;top:420px;width:9px;height:9px;border:1px solid #7a8a94;border-radius:1px;background:#fff"></div>
<div class="a" style="left:116px;top:424px;width:5px;height:1px;background:#202020"></div>
<div class="a" style="left:118px;top:422px;width:1px;height:5px;background:#202020"></div>
<div class="a" style="left:124px;top:424px;width:7px;height:1px;background:repeating-linear-gradient(90deg,#6f8494 0 1px,transparent 1px 2px)"></div>
<div class="a" style="left:132px;top:420px;width:16px;height:10px;background:#888888"></div>
<div class="a" style="left:154px;top:419px;width:71px;height:14px;overflow:hidden"><div class="t" style="left:0;top:0;">Корневая страница</div></div>
<div class="a" style="left:114px;top:432px;width:9px;height:9px;border:1px solid #7a8a94;border-radius:1px;background:#fff"></div>
<div class="a" style="left:116px;top:436px;width:5px;height:1px;background:#202020"></div>
<div class="a" style="left:118px;top:434px;width:1px;height:5px;background:#202020"></div>
<div class="a" style="left:124px;top:436px;width:7px;height:1px;background:repeating-linear-gradient(90deg,#6f8494 0 1px,transparent 1px 2px)"></div>
<div class="a" style="left:132px;top:432px;width:16px;height:10px;background:repeating-linear-gradient(90deg,#8a8a8a 0 3px,#7a7a7a 3px 4px)"></div>
<div class="a" style="left:154px;top:431px;width:71px;height:14px;overflow:hidden"><div class="t" style="left:0;top:0;">Группа обзорных</div></div>
<div class="a" style="left:114px;top:444px;width:9px;height:9px;border:1px solid #7a8a94;border-radius:1px;background:#fff"></div>
<div class="a" style="left:116px;top:448px;width:5px;height:1px;background:#202020"></div>
<div class="a" style="left:118px;top:446px;width:1px;height:5px;background:#202020"></div>
<div class="a" style="left:124px;top:448px;width:7px;height:1px;background:repeating-linear-gradient(90deg,#6f8494 0 1px,transparent 1px 2px)"></div>
<div class="a" style="left:132px;top:445px;width:16px;height:8px;background:#dcdcdc"></div>
<div class="a" style="left:154px;top:443px;width:71px;height:14px;overflow:hidden"><div class="t" style="left:0;top:0;">Подтверждение</div></div>
<div class="a" style="left:114px;top:456px;width:9px;height:9px;border:1px solid #7a8a94;border-radius:1px;background:#fff"></div>
<div class="a" style="left:116px;top:460px;width:5px;height:1px;background:#202020"></div>
<div class="a" style="left:118px;top:458px;width:1px;height:5px;background:#202020"></div>
<div class="a" style="left:124px;top:460px;width:7px;height:1px;background:repeating-linear-gradient(90deg,#6f8494 0 1px,transparent 1px 2px)"></div>
<div class="a" style="left:132px;top:458px;width:16px;height:6px;background:#121812"></div>
<div class="a" style="left:154px;top:455px;width:71px;height:14px;overflow:hidden"><div class="t" style="left:0;top:0;">Отобр аналоговых</div></div>
<div class="a" style="left:114px;top:468px;width:9px;height:9px;border:1px solid #7a8a94;border-radius:1px;background:#fff"></div>
<div class="a" style="left:116px;top:472px;width:5px;height:1px;background:#202020"></div>
<div class="a" style="left:118px;top:470px;width:1px;height:5px;background:#202020"></div>
<div class="a" style="left:124px;top:472px;width:7px;height:1px;background:repeating-linear-gradient(90deg,#6f8494 0 1px,transparent 1px 2px)"></div>
<div class="a" style="left:132px;top:471px;width:16px;height:3px;background:#101010"></div>
<div class="a" style="left:154px;top:467px;width:71px;height:14px;overflow:hidden"><div class="t" style="left:0;top:0;">Отобр аналоговых</div></div>
<div class="a" style="left:114px;top:482px;width:9px;height:9px;border:1px solid #7a8a94;border-radius:1px;background:#fff"></div>
<div class="a" style="left:116px;top:486px;width:5px;height:1px;background:#202020"></div>
<div class="a" style="left:118px;top:484px;width:1px;height:5px;background:#202020"></div>
<div class="a" style="left:124px;top:486px;width:7px;height:1px;background:repeating-linear-gradient(90deg,#6f8494 0 1px,transparent 1px 2px)"></div>
<div class="a" style="left:132px;top:479px;width:16px;height:16px;background:#848484"></div>
<div class="a" style="left:154px;top:481px;width:71px;height:14px;overflow:hidden"><div class="t" style="left:0;top:0;">Паспорт</div></div>
<div class="a" style="left:114px;top:496px;width:9px;height:9px;border:1px solid #7a8a94;border-radius:1px;background:#fff"></div>
<div class="a" style="left:116px;top:500px;width:5px;height:1px;background:#202020"></div>
<div class="a" style="left:118px;top:498px;width:1px;height:5px;background:#202020"></div>
<div class="a" style="left:124px;top:500px;width:7px;height:1px;background:repeating-linear-gradient(90deg,#6f8494 0 1px,transparent 1px 2px)"></div>
<div class="a" style="left:132px;top:496px;width:16px;height:11px;background:linear-gradient(#d0d0d0 0 3px,#101010 3px)"></div>
<div class="a" style="left:154px;top:495px;width:71px;height:14px;overflow:hidden"><div class="t" style="left:0;top:0;">Панель настройки</div></div>
<div class="a" style="left:114px;top:510px;width:9px;height:9px;border:1px solid #7a8a94;border-radius:1px;background:#fff"></div>
<div class="a" style="left:116px;top:514px;width:5px;height:1px;background:#202020"></div>
<div class="a" style="left:118px;top:512px;width:1px;height:5px;background:#202020"></div>
<div class="a" style="left:124px;top:514px;width:7px;height:1px;background:repeating-linear-gradient(90deg,#6f8494 0 1px,transparent 1px 2px)"></div>
<div class="a" style="left:132px;top:507px;width:5px;height:16px;background:repeating-linear-gradient(#d0d0d0 0 2px,#808080 2px 3px)"></div>
<div class="a" style="left:143px;top:509px;width:82px;height:14px;overflow:hidden"><div class="t" style="left:0;top:0;">Панель документов</div></div>
<div class="a" style="left:114px;top:524px;width:9px;height:9px;border:1px solid #7a8a94;border-radius:1px;background:#fff"></div>
<div class="a" style="left:116px;top:528px;width:5px;height:1px;background:#202020"></div>
<div class="a" style="left:118px;top:526px;width:1px;height:5px;background:#202020"></div>
<div class="a" style="left:124px;top:528px;width:7px;height:1px;background:repeating-linear-gradient(90deg,#6f8494 0 1px,transparent 1px 2px)"></div>
<div class="a" style="left:132px;top:525px;width:16px;height:7px;background:#d8d8dc"></div>
<div class="a" style="left:154px;top:523px;width:71px;height:14px;overflow:hidden"><div class="t" style="left:0;top:0;">Выбор параметров</div></div>
<div class="a" style="left:114px;top:536px;width:9px;height:9px;border:1px solid #7a8a94;border-radius:1px;background:#fff"></div>
<div class="a" style="left:116px;top:540px;width:5px;height:1px;background:#202020"></div>
<div class="a" style="left:118px;top:538px;width:1px;height:5px;background:#202020"></div>
<div class="a" style="left:124px;top:540px;width:7px;height:1px;background:repeating-linear-gradient(90deg,#6f8494 0 1px,transparent 1px 2px)"></div>
<div class="a" style="left:132px;top:537px;width:16px;height:9px;background:linear-gradient(#202020 0 4px,#50a050 4px 5px,#303030 5px)"></div>
<div class="a" style="left:154px;top:535px;width:71px;height:14px;overflow:hidden"><div class="t" style="left:0;top:0;">Группа контуров</div></div>
<div class="a" style="left:114px;top:548px;width:9px;height:9px;border:1px solid #7a8a94;border-radius:1px;background:#fff"></div>
<div class="a" style="left:116px;top:552px;width:5px;height:1px;background:#202020"></div>
<div class="a" style="left:118px;top:550px;width:1px;height:5px;background:#202020"></div>
<div class="a" style="left:124px;top:552px;width:7px;height:1px;background:repeating-linear-gradient(90deg,#6f8494 0 1px,transparent 1px 2px)"></div>
<div class="a" style="left:132px;top:548px;width:16px;height:10px;background:#0a0a0a"></div>
<div class="a" style="left:154px;top:547px;width:71px;height:14px;overflow:hidden"><div class="t" style="left:0;top:0;">Группа графиков</div></div>
<div class="a" style="left:114px;top:562px;width:9px;height:9px;border:1px solid #7a8a94;border-radius:1px;background:#fff"></div>
<div class="a" style="left:116px;top:566px;width:5px;height:1px;background:#202020"></div>
<div class="a" style="left:118px;top:564px;width:1px;height:5px;background:#202020"></div>
<div class="a" style="left:124px;top:566px;width:7px;height:1px;background:repeating-linear-gradient(90deg,#6f8494 0 1px,transparent 1px 2px)"></div>
<div class="a" style="left:132px;top:559px;width:5px;height:16px;background:repeating-linear-gradient(#d0d0d0 0 2px,#808080 2px 3px)"></div>
<div class="a" style="left:143px;top:561px;width:82px;height:14px;overflow:hidden"><div class="t" style="left:0;top:0;">Панель группы параметров</div></div>
<div class="a" style="left:114px;top:576px;width:9px;height:9px;border:1px solid #7a8a94;border-radius:1px;background:#fff"></div>
<div class="a" style="left:116px;top:580px;width:5px;height:1px;background:#202020"></div>
<div class="a" style="left:118px;top:578px;width:1px;height:5px;background:#202020"></div>
<div class="a" style="left:124px;top:580px;width:7px;height:1px;background:repeating-linear-gradient(90deg,#6f8494 0 1px,transparent 1px 2px)"></div>
<div class="a" style="left:132px;top:577px;width:16px;height:9px;background:linear-gradient(90deg,#f0f0f0 0 9px,#888 9px)"></div>
<div class="a" style="left:154px;top:575px;width:71px;height:14px;overflow:hidden"><div class="t" style="left:0;top:0;">Рецепт: редактирование</div></div>
<div class="a" style="left:114px;top:588px;width:9px;height:9px;border:1px solid #7a8a94;border-radius:1px;background:#fff"></div>
<div class="a" style="left:116px;top:592px;width:5px;height:1px;background:#202020"></div>
<div class="a" style="left:118px;top:590px;width:1px;height:5px;background:#202020"></div>
<div class="a" style="left:124px;top:592px;width:7px;height:1px;background:repeating-linear-gradient(90deg,#6f8494 0 1px,transparent 1px 2px)"></div>
<div class="a" style="left:132px;top:589px;width:16px;height:8px;background:#f4f4f4;border:1px solid #999"></div>
<div class="a" style="left:154px;top:587px;width:71px;height:14px;overflow:hidden"><div class="t" style="left:0;top:0;">Рецепт: использование</div></div>
<div class="a" style="left:114px;top:600px;width:9px;height:9px;border:1px solid #7a8a94;border-radius:1px;background:#fff"></div>
<div class="a" style="left:116px;top:604px;width:5px;height:1px;background:#202020"></div>
<div class="a" style="left:118px;top:602px;width:1px;height:5px;background:#202020"></div>
<div class="a" style="left:124px;top:604px;width:7px;height:1px;background:repeating-linear-gradient(90deg,#6f8494 0 1px,transparent 1px 2px)"></div>
<div class="a" style="left:132px;top:601px;width:16px;height:9px;background:linear-gradient(#888 0 2px,#f0f0f0 2px);border:1px solid #999"></div>
<div class="a" style="left:154px;top:599px;width:71px;height:14px;overflow:hidden"><div class="t" style="left:0;top:0;">Рецепт: использование</div></div>
<div class="a" style="left:114px;top:614px;width:9px;height:9px;border:1px solid #7a8a94;border-radius:1px;background:#fff"></div>
<div class="a" style="left:116px;top:618px;width:5px;height:1px;background:#202020"></div>
<div class="a" style="left:118px;top:616px;width:1px;height:5px;background:#202020"></div>
<div class="a" style="left:124px;top:618px;width:7px;height:1px;background:repeating-linear-gradient(90deg,#6f8494 0 1px,transparent 1px 2px)"></div>
<div class="a" style="left:132px;top:611px;width:5px;height:16px;background:#808080"></div>
<div class="a" style="left:143px;top:613px;width:82px;height:14px;overflow:hidden"><div class="t" style="left:0;top:0;">Терминальная панель</div></div>
</div>
<div class="a" style="left:7px;top:661px;width:236px;height:20px;background:#fff;border:1px solid #5d7686;border-radius:3px"></div>
<div class="a" style="left:245px;top:286px;width:2px;height:2px;background:#e2f2fa"></div>
<div class="a" style="left:245px;top:286px;width:1px;height:1px;background:#7a92a2"></div>
<div class="a" style="left:245px;top:291px;width:2px;height:2px;background:#e2f2fa"></div>
<div class="a" style="left:245px;top:291px;width:1px;height:1px;background:#7a92a2"></div>
<div class="a" style="left:245px;top:296px;width:2px;height:2px;background:#e2f2fa"></div>
<div class="a" style="left:245px;top:296px;width:1px;height:1px;background:#7a92a2"></div>
<div class="a" style="left:245px;top:301px;width:2px;height:2px;background:#e2f2fa"></div>
<div class="a" style="left:245px;top:301px;width:1px;height:1px;background:#7a92a2"></div>
<div class="a" style="left:245px;top:306px;width:2px;height:2px;background:#e2f2fa"></div>
<div class="a" style="left:245px;top:306px;width:1px;height:1px;background:#7a92a2"></div>
<div class="a" style="left:245px;top:311px;width:2px;height:2px;background:#e2f2fa"></div>
<div class="a" style="left:245px;top:311px;width:1px;height:1px;background:#7a92a2"></div>
<div class="a" style="left:245px;top:316px;width:2px;height:2px;background:#e2f2fa"></div>
<div class="a" style="left:245px;top:316px;width:1px;height:1px;background:#7a92a2"></div>
<div class="a" style="left:245px;top:321px;width:2px;height:2px;background:#e2f2fa"></div>
<div class="a" style="left:245px;top:321px;width:1px;height:1px;background:#7a92a2"></div>
<div class="a" style="left:245px;top:326px;width:2px;height:2px;background:#e2f2fa"></div>
<div class="a" style="left:245px;top:326px;width:1px;height:1px;background:#7a92a2"></div>
<div class="a" style="left:245px;top:331px;width:2px;height:2px;background:#e2f2fa"></div>
<div class="a" style="left:245px;top:331px;width:1px;height:1px;background:#7a92a2"></div>
<div class="a" style="left:245px;top:336px;width:2px;height:2px;background:#e2f2fa"></div>
<div class="a" style="left:245px;top:336px;width:1px;height:1px;background:#7a92a2"></div>
<div class="a" style="left:245px;top:341px;width:2px;height:2px;background:#e2f2fa"></div>
<div class="a" style="left:245px;top:341px;width:1px;height:1px;background:#7a92a2"></div>
<div class="a" style="left:245px;top:346px;width:2px;height:2px;background:#e2f2fa"></div>
<div class="a" style="left:245px;top:346px;width:1px;height:1px;background:#7a92a2"></div>
<div class="a" style="left:245px;top:351px;width:2px;height:2px;background:#e2f2fa"></div>
<div class="a" style="left:245px;top:351px;width:1px;height:1px;background:#7a92a2"></div>
<div class="a" style="left:245px;top:356px;width:2px;height:2px;background:#e2f2fa"></div>
<div class="a" style="left:245px;top:356px;width:1px;height:1px;background:#7a92a2"></div>
<div class="a" style="left:245px;top:361px;width:2px;height:2px;background:#e2f2fa"></div>
<div class="a" style="left:245px;top:361px;width:1px;height:1px;background:#7a92a2"></div>
<div class="a" style="left:245px;top:366px;width:2px;height:2px;background:#e2f2fa"></div>
<div class="a" style="left:245px;top:366px;width:1px;height:1px;background:#7a92a2"></div>
<div class="a" style="left:245px;top:371px;width:2px;height:2px;background:#e2f2fa"></div>
<div class="a" style="left:245px;top:371px;width:1px;height:1px;background:#7a92a2"></div>
<div class="a" style="left:245px;top:376px;width:2px;height:2px;background:#e2f2fa"></div>
<div class="a" style="left:245px;top:376px;width:1px;height:1px;background:#7a92a2"></div>
<div class="a" style="left:245px;top:381px;width:2px;height:2px;background:#e2f2fa"></div>
<div class="a" style="left:245px;top:381px;width:1px;height:1px;background:#7a92a2"></div>
<div class="a" style="left:245px;top:386px;width:2px;height:2px;background:#e2f2fa"></div>
<div class="a" style="left:245px;top:386px;width:1px;height:1px;background:#7a92a2"></div>
<div class="a" style="left:245px;top:391px;width:2px;height:2px;background:#e2f2fa"></div>
<div class="a" style="left:245px;top:391px;width:1px;height:1px;background:#7a92a2"></div>
<div class="a" style="left:245px;top:396px;width:2px;height:2px;background:#e2f2fa"></div>
<div class="a" style="left:245px;top:396px;width:1px;height:1px;background:#7a92a2"></div>
<div class="a" style="left:245px;top:401px;width:2px;height:2px;background:#e2f2fa"></div>
<div class="a" style="left:245px;top:401px;width:1px;height:1px;background:#7a92a2"></div>
<div class="a" style="left:245px;top:406px;width:2px;height:2px;background:#e2f2fa"></div>
<div class="a" style="left:245px;top:406px;width:1px;height:1px;background:#7a92a2"></div>
<div class="a" style="left:245px;top:411px;width:2px;height:2px;background:#e2f2fa"></div>
<div class="a" style="left:245px;top:411px;width:1px;height:1px;background:#7a92a2"></div>
<div class="a" style="left:245px;top:416px;width:2px;height:2px;background:#e2f2fa"></div>
<div class="a" style="left:245px;top:416px;width:1px;height:1px;background:#7a92a2"></div>
<div class="a" style="left:245px;top:421px;width:2px;height:2px;background:#e2f2fa"></div>
<div class="a" style="left:245px;top:421px;width:1px;height:1px;background:#7a92a2"></div>
<div class="a" style="left:245px;top:426px;width:2px;height:2px;background:#e2f2fa"></div>
<div class="a" style="left:245px;top:426px;width:1px;height:1px;background:#7a92a2"></div>
<div class="a" style="left:245px;top:431px;width:2px;height:2px;background:#e2f2fa"></div>
<div class="a" style="left:245px;top:431px;width:1px;height:1px;background:#7a92a2"></div>
<div class="a" style="left:245px;top:436px;width:2px;height:2px;background:#e2f2fa"></div>
<div class="a" style="left:245px;top:436px;width:1px;height:1px;background:#7a92a2"></div>
<div class="a" style="left:245px;top:441px;width:2px;height:2px;background:#e2f2fa"></div>
<div class="a" style="left:245px;top:441px;width:1px;height:1px;background:#7a92a2"></div>
<div class="a" style="left:245px;top:446px;width:2px;height:2px;background:#e2f2fa"></div>
<div class="a" style="left:245px;top:446px;width:1px;height:1px;background:#7a92a2"></div>
<div class="a" style="left:245px;top:451px;width:2px;height:2px;background:#e2f2fa"></div>
<div class="a" style="left:245px;top:451px;width:1px;height:1px;background:#7a92a2"></div>
<div class="a" style="left:245px;top:456px;width:2px;height:2px;background:#e2f2fa"></div>
<div class="a" style="left:245px;top:456px;width:1px;height:1px;background:#7a92a2"></div>
<div class="a" style="left:245px;top:461px;width:2px;height:2px;background:#e2f2fa"></div>
<div class="a" style="left:245px;top:461px;width:1px;height:1px;background:#7a92a2"></div>
<div class="a" style="left:245px;top:466px;width:2px;height:2px;background:#e2f2fa"></div>
<div class="a" style="left:245px;top:466px;width:1px;height:1px;background:#7a92a2"></div>
<div class="a" style="left:245px;top:471px;width:2px;height:2px;background:#e2f2fa"></div>
<div class="a" style="left:245px;top:471px;width:1px;height:1px;background:#7a92a2"></div>
<div class="a" style="left:245px;top:476px;width:2px;height:2px;background:#e2f2fa"></div>
<div class="a" style="left:245px;top:476px;width:1px;height:1px;background:#7a92a2"></div>
<div class="a" style="left:249px;top:89px;width:695px;height:592px;border-left:1px solid #cde6f4;border-top:1px solid #cde6f4;border-right:1px solid #000;border-bottom:1px solid #000"></div>
<svg class="a" style="left:260px;top:100px" width="11" height="32" viewBox="0 0 11 32">
<rect x="0" y="0" width="11" height="32" fill="#8c8c8c"/><rect x="1" y="3" width="9" height="2" fill="#f0f0f0"/>
<rect x="1" y="19" width="1.5" height="9" fill="#20a0a0"/><rect x="4" y="18" width="2" height="10" fill="#40c040"/><rect x="7" y="18" width="2" height="10" fill="#30a030"/>
<rect x="3" y="8" width="5" height="9" fill="none" stroke="#a8a8a8" stroke-width=".8"/><rect x="1" y="28" width="9" height="2" fill="#f0f0f0"/></svg>
<div class="a" style="left:473px;top:106px;white-space:pre;font:italic bold 17px/20px 'Liberation Sans', sans-serif;letter-spacing:-0.22px">Библиотечный виджет: ElCadr</div>
<div class="a" style="left:261px;top:147px;width:63px;height:16px;background:linear-gradient(#a9c1ce,#98b2c1);border:1px solid #687f8e;border-bottom:none;border-radius:3px 3px 0 0"></div>
<div class="t" style="left:271px;top:148px;">Виджет</div>
<div class="a" style="left:323px;top:147px;width:134px;height:16px;background:linear-gradient(#a9c1ce,#98b2c1);border:1px solid #687f8e;border-bottom:none;border-radius:3px 3px 0 0"></div>
<div class="t" style="left:334px;top:148px;">Вложенные виджеты</div>
<div class="a" style="left:456px;top:147px;width:77px;height:16px;background:linear-gradient(#a9c1ce,#98b2c1);border:1px solid #687f8e;border-bottom:none;border-radius:3px 3px 0 0"></div>
<div class="t" style="left:468px;top:148px;">Атрибуты</div>
<div class="a" style="left:532px;top:147px;width:56px;height:16px;background:linear-gradient(#a9c1ce,#98b2c1);border:1px solid #687f8e;border-bottom:none;border-radius:3px 3px 0 0"></div>
<div class="t" style="left:543px;top:148px;">Связи</div>
<div class="a" style="left:260px;top:161px;width:673px;height:509px;border:1px solid #65798a;border-radius:3px;background:#9db8c6"></div>
<div class="a" style="left:262px;top:163px;width:669px;height:505px;border:1px solid #65798a;border-radius:2px"></div>
<div class="a" style="left:587px;top:143px;width:78px;height:21px;background:#9db8c6;border:1px solid #65798a;border-bottom:none;border-radius:4px 4px 0 0"></div>
<div class="t" style="left:598px;top:147px;">Обработка</div>
<div class="t" style="left:273px;top:178px;">Виджет:</div>
<div class="a" style="left:321px;top:174px;width:100px;height:20px;background:linear-gradient(#abc3d0,#98b2c1);border:1px solid #687f8e;border-radius:3px"></div>
<div class="a" style="left:404px;top:175px;width:1px;height:18px;background:#687f8e"></div>
<svg class="a" style="left:405px;top:175px" width="15" height="18"><path d="M3.5 7 L11.5 7 L7.5 11 Z" fill="#000"/></svg>
<div class="t" style="left:326px;top:178px;">.</div>
<div class="t" style="left:273px;top:197px;">Атрибуты:</div>
<div class="a" style="left:273px;top:212px;width:647px;height:124px;border:2px solid #687f8e;border-radius:2px;background:#fff"></div>
<div class="a" style="left:275px;top:214px;width:627px;height:20px;background:linear-gradient(#a8c0cd,#93adbd)"></div>
<div class="a" style="left:275px;top:214px;width:21px;height:20px;border-right:2px solid #6d8493;border-bottom:1px solid #6d8493"></div>
<div class="a" style="left:296px;top:214px;width:45px;height:20px;border-right:2px solid #6d8493;border-bottom:1px solid #6d8493"></div>
<div class="a" style="left:341px;top:214px;width:63px;height:20px;border-right:2px solid #6d8493;border-bottom:1px solid #6d8493"></div>
<div class="a" style="left:404px;top:214px;width:81px;height:20px;border-right:2px solid #6d8493;border-bottom:1px solid #6d8493"></div>
<div class="a" style="left:485px;top:214px;width:86px;height:20px;border-right:2px solid #6d8493;border-bottom:1px solid #6d8493"></div>
<div class="a" style="left:571px;top:214px;width:67px;height:20px;border-right:2px solid #6d8493;border-bottom:1px solid #6d8493"></div>
<div class="a" style="left:638px;top:214px;width:89px;height:20px;border-right:2px solid #6d8493;border-bottom:1px solid #6d8493"></div>
<div class="a" style="left:727px;top:214px;width:112px;height:20px;border-right:2px solid #6d8493;border-bottom:1px solid #6d8493"></div>
<div class="a" style="left:0;top:0;width:951px;height:711px;clip-path:inset(214px 49px 376px 275px)">
<div class="t" style="left:313px;top:218px;">Id</div>
<div class="t" style="left:359px;top:218px;">Имя</div>
<div class="t" style="left:434px;top:218px;">Тип</div>
<div class="a" style="left:490px;top:214px;width:79px;height:19px;overflow:hidden"><div class="t" style="left:-7.3px;top:4px">Рабочая область</div></div>
<div class="t" style="left:577px;top:218px;">Обработка</div>
<div class="t" style="left:646px;top:218px;">Конфигурация</div>
<div class="a" style="left:730px;top:214px;width:105px;height:19px;overflow:hidden"><div class="t" style="left:-18.5px;top:4px">Конфигурационный шаблон</div></div>
</div>
<div class="a" style="left:0;top:0;width:951px;height:711px;clip-path:inset(234px 49px 377px 275px)">
<div class="a" style="left:275px;top:234px;width:21px;height:20px;background:linear-gradient(90deg,#a8c0cd,#93adbd);border-right:2px solid #6d8493;border-bottom:2px solid #6d8493"></div>
<div class="a" style="left:296px;top:234px;width:45px;height:20px;border-right:1px solid #9aacb8;border-bottom:1px solid #9aacb8"></div>
<div class="a" style="left:341px;top:234px;width:63px;height:20px;border-right:1px solid #9aacb8;border-bottom:1px solid #9aacb8"></div>
<div class="a" style="left:404px;top:234px;width:81px;height:20px;border-right:1px solid #9aacb8;border-bottom:1px solid #9aacb8"></div>
<div class="a" style="left:485px;top:234px;width:86px;height:20px;border-right:1px solid #9aacb8;border-bottom:1px solid #9aacb8"></div>
<div class="a" style="left:571px;top:234px;width:67px;height:20px;border-right:1px solid #9aacb8;border-bottom:1px solid #9aacb8"></div>
<div class="a" style="left:638px;top:234px;width:89px;height:20px;border-right:1px solid #9aacb8;border-bottom:1px solid #9aacb8"></div>
<div class="a" style="left:727px;top:234px;width:112px;height:20px;border-right:1px solid #9aacb8;border-bottom:1px solid #9aacb8"></div>
<div class="t" style="left:279px;top:237px;">1</div>
<div class="t" style="left:298px;top:237px;">id</div>
<div class="t" style="left:343px;top:237px;">Id</div>
<div class="t" style="left:406px;top:237px;">Строка</div>
<div class="t" style="left:488px;top:237px;">|</div>
<div class="t" style="left:640px;top:237px;">Нет</div>
<div class="a" style="left:275px;top:254px;width:21px;height:20px;background:linear-gradient(90deg,#a8c0cd,#93adbd);border-right:2px solid #6d8493;border-bottom:2px solid #6d8493"></div>
<div class="a" style="left:296px;top:254px;width:45px;height:20px;border-right:1px solid #9aacb8;border-bottom:1px solid #9aacb8"></div>
<div class="a" style="left:341px;top:254px;width:63px;height:20px;border-right:1px solid #9aacb8;border-bottom:1px solid #9aacb8"></div>
<div class="a" style="left:404px;top:254px;width:81px;height:20px;border-right:1px solid #9aacb8;border-bottom:1px solid #9aacb8"></div>
<div class="a" style="left:485px;top:254px;width:86px;height:20px;border-right:1px solid #9aacb8;border-bottom:1px solid #9aacb8"></div>
<div class="a" style="left:571px;top:254px;width:67px;height:20px;border-right:1px solid #9aacb8;border-bottom:1px solid #9aacb8"></div>
<div class="a" style="left:638px;top:254px;width:89px;height:20px;border-right:1px solid #9aacb8;border-bottom:1px solid #9aacb8"></div>
<div class="a" style="left:727px;top:254px;width:112px;height:20px;border-right:1px solid #9aacb8;border-bottom:1px solid #9aacb8"></div>
<div class="t" style="left:279px;top:257px;">2</div>
<div class="t" style="left:298px;top:257px;">path</div>
<div class="t" style="left:343px;top:257px;">Путь</div>
<div class="t" style="left:406px;top:257px;">Строка</div>
<div class="t" style="left:488px;top:257px;">|</div>
<div class="t" style="left:640px;top:257px;">Нет</div>
<svg class="a" style="left:591px;top:254px" width="23" height="20" viewBox="0 0 23 20"><path d="M1 9 L5 7 L10 14 L21 1 L22 3 L11 19 Z" fill="#48c048" stroke="#2a9a2a" stroke-width=".8"/></svg>
<div class="a" style="left:275px;top:274px;width:21px;height:20px;background:linear-gradient(90deg,#a8c0cd,#93adbd);border-right:2px solid #6d8493;border-bottom:2px solid #6d8493"></div>
<div class="a" style="left:296px;top:274px;width:45px;height:20px;border-right:1px solid #9aacb8;border-bottom:1px solid #9aacb8"></div>
<div class="a" style="left:341px;top:274px;width:63px;height:20px;border-right:1px solid #9aacb8;border-bottom:1px solid #9aacb8"></div>
<div class="a" style="left:404px;top:274px;width:81px;height:20px;border-right:1px solid #9aacb8;border-bottom:1px solid #9aacb8"></div>
<div class="a" style="left:485px;top:274px;width:86px;height:20px;border-right:1px solid #9aacb8;border-bottom:1px solid #9aacb8"></div>
<div class="a" style="left:571px;top:274px;width:67px;height:20px;border-right:1px solid #9aacb8;border-bottom:1px solid #9aacb8"></div>
<div class="a" style="left:638px;top:274px;width:89px;height:20px;border-right:1px solid #9aacb8;border-bottom:1px solid #9aacb8"></div>
<div class="a" style="left:727px;top:274px;width:112px;height:20px;border-right:1px solid #9aacb8;border-bottom:1px solid #9aacb8"></div>
<div class="t" style="left:279px;top:277px;">3</div>
<div class="t" style="left:298px;top:277px;">parent</div>
<div class="t" style="left:343px;top:277px;">Родитель</div>
<div class="t" style="left:406px;top:277px;">Строка</div>
<div class="t" style="left:488px;top:277px;">|</div>
<div class="t" style="left:640px;top:277px;">Нет</div>
<div class="a" style="left:275px;top:294px;width:21px;height:20px;background:linear-gradient(90deg,#a8c0cd,#93adbd);border-right:2px solid #6d8493;border-bottom:2px solid #6d8493"></div>
<div class="a" style="left:296px;top:294px;width:45px;height:20px;border-right:1px solid #9aacb8;border-bottom:1px solid #9aacb8"></div>
<div class="a" style="left:341px;top:294px;width:63px;height:20px;border-right:1px solid #9aacb8;border-bottom:1px solid #9aacb8"></div>
<div class="a" style="left:404px;top:294px;width:81px;height:20px;border-right:1px solid #9aacb8;border-bottom:1px solid #9aacb8"></div>
<div class="a" style="left:485px;top:294px;width:86px;height:20px;border-right:1px solid #9aacb8;border-bottom:1px solid #9aacb8"></div>
<div class="a" style="left:571px;top:294px;width:67px;height:20px;border-right:1px solid #9aacb8;border-bottom:1px solid #9aacb8"></div>
<div class="a" style="left:638px;top:294px;width:89px;height:20px;border-right:1px solid #9aacb8;border-bottom:1px solid #9aacb8"></div>
<div class="a" style="left:727px;top:294px;width:112px;height:20px;border-right:1px solid #9aacb8;border-bottom:1px solid #9aacb8"></div>
<div class="t" style="left:279px;top:297px;">4</div>
<div class="t" style="left:298px;top:297px;">owner</div>
<div class="t" style="left:343px;top:297px;">Владелец</div>
<div class="t" style="left:406px;top:297px;">Строка</div>
<div class="t" style="left:488px;top:297px;">|</div>
<div class="t" style="left:640px;top:297px;">Нет</div>
<div class="a" style="left:275px;top:314px;width:21px;height:25px;background:linear-gradient(90deg,#a8c0cd,#93adbd);border-right:2px solid #6d8493;border-bottom:2px solid #6d8493"></div>
<div class="a" style="left:296px;top:314px;width:45px;height:25px;border-right:1px solid #9aacb8;border-bottom:1px solid #9aacb8"></div>
<div class="a" style="left:341px;top:314px;width:63px;height:25px;border-right:1px solid #9aacb8;border-bottom:1px solid #9aacb8"></div>
<div class="a" style="left:404px;top:314px;width:81px;height:25px;border-right:1px solid #9aacb8;border-bottom:1px solid #9aacb8"></div>
<div class="a" style="left:485px;top:314px;width:86px;height:25px;border-right:1px solid #9aacb8;border-bottom:1px solid #9aacb8"></div>
<div class="a" style="left:571px;top:314px;width:67px;height:25px;border-right:1px solid #9aacb8;border-bottom:1px solid #9aacb8"></div>
<div class="a" style="left:638px;top:314px;width:89px;height:25px;border-right:1px solid #9aacb8;border-bottom:1px solid #9aacb8"></div>
<div class="a" style="left:727px;top:314px;width:112px;height:25px;border-right:1px solid #9aacb8;border-bottom:1px solid #9aacb8"></div>
<div class="t" style="left:279px;top:320px;">5</div>
<div class="t" style="left:298px;top:320px;">perm</div>
<div class="t" style="left:343px;top:320px;">Доступ</div>
<div class="t" style="left:406px;top:320px;">Выбор целых</div>
<div class="t" style="left:488px;top:320px;">0;256;288;29...</div>
<div class="t" style="left:640px;top:320px;">Нет</div>
</div>
<div class="a" style="left:297px;top:234px;width:43px;height:19px;border:1px dotted #000"></div>
<div class="a" style="left:902px;top:214px;width:16px;height:120px;background:#9db8c6"></div>
<div class="a" style="left:902px;top:256px;width:16px;height:47px;"></div>
<div class="a chk" style="left:902px;top:256px;width:16px;height:47px"></div>
<div class="a btn" style="left:902px;top:214px;width:16px;height:16px"></div>
<svg class="a" style="left:902px;top:214px" width="16" height="16"><path d="M3.5 10.0 L12.5 10.0 L8.0 5.5 Z" fill="#000"/></svg>
<div class="a hdl" style="left:902px;top:230px;width:16px;height:26px"></div>
<div class="a btn" style="left:902px;top:303px;width:16px;height:16px"></div>
<svg class="a" style="left:902px;top:303px" width="16" height="16"><path d="M3.5 10.0 L12.5 10.0 L8.0 5.5 Z" fill="#000"/></svg>
<div class="a btn" style="left:902px;top:318px;width:16px;height:16px"></div>
<svg class="a" style="left:902px;top:318px" width="16" height="16"><path d="M3.5 6.0 L12.5 6.0 L8.0 10.5 Z" fill="#000"/></svg>
<div class="a" style="left:273px;top:345px;width:647px;height:312px;border:1px solid #687f8e;border-radius:3px"></div>
<div class="a" style="left:279px;top:340px;width:69px;height:10px;background:#9db8c6"></div>
<div class="t" style="left:281px;top:339px;">Вычисление</div>
<div class="t" style="left:278px;top:360px;">Язык программы:</div>
<div class="a" style="left:374px;top:356px;width:541px;height:20px;background:#fff;border:1px solid #687f8e;border-radius:3px"></div>
<div class="a btn" style="left:898px;top:357px;width:15px;height:18px;border-radius:0 2px 2px 0"></div>
<svg class="a" style="left:898px;top:357px" width="15" height="18"><path d="M3.5 7.5 L11.5 7.5 L7.5 11.5 Z" fill="#000"/></svg>
<div class="t" style="left:380px;top:360px;letter-spacing:-0.15px">JavaLikeCalc.JavaScript</div>
<div class="t" style="left:278px;top:383px;">Период вычисления (мс):</div>
<div class="a" style="left:415px;top:379px;width:105px;height:19px;background:#fff;border:1px solid #687f8e;border-radius:3px"></div>
<div class="a btn" style="left:503px;top:379px;width:17px;height:10px;border-radius:0 3px 0 0"></div>
<div class="a btn" style="left:503px;top:388px;width:17px;height:10px;border-radius:0 0 3px 0"></div>
<svg class="a" style="left:503px;top:379px" width="17" height="19"><path d="M4.5 7 L12.5 7 L8.5 3 Z M4.5 12.5 L12.5 12.5 L8.5 16.5 Z" fill="#000"/></svg>
<div class="t" style="left:421px;top:383px;">500</div>
<div class="t" style="left:278px;top:402px;">Программа:</div>
<div class="a" style="left:278px;top:418px;width:637px;height:232px;border:2px solid #687f8e;border-radius:3px;background:#fff"></div>
<div class="a" style="left:0;top:0;width:951px;height:711px;clip-path:inset(420px 53px 79px 280px)">
<div class="m" style="left:284.5px;top:424px"><span style="color:#00007f;font-weight:bold">using</span> Special.FLibSYS<span style="color:#00007f;font-weight:bold">;</span>
ev_wrk <span style="color:#00007f;font-weight:bold">=</span> ev_rez <span style="color:#00007f;font-weight:bold">=</span> <span style="color:#008000">""</span><span style="color:#00007f;font-weight:bold">;</span>
off <span style="color:#00007f;font-weight:bold">=</span> <span style="color:#ff8000">0</span><span style="color:#00007f;font-weight:bold">;</span>

<span style="color:#00007f;font-weight:bold">if</span><span style="color:#0000ff">(</span><span style="color:#00007f;font-weight:bold">!</span>prmColor.isEVal<span style="color:#0000ff">())</span> <span style="color:#0000ff">{</span> bordColor <span style="color:#00007f;font-weight:bold">=</span> prmColor<span style="color:#00007f;font-weight:bold">;</span> bordWidth <span style="color:#00007f;font-weight:bold">=</span> <span style="color:#ff8000">2</span><span style="color:#00007f;font-weight:bold">;</span> <span style="color:#0000ff">}</span>
<span style="color:#00007f;font-weight:bold">else</span> <span style="color:#0000ff">{</span> bordColor <span style="color:#00007f;font-weight:bold">=</span> <span style="color:#008000">"black"</span><span style="color:#00007f;font-weight:bold">;</span> bordWidth <span style="color:#00007f;font-weight:bold">=</span> <span style="color:#ff8000">1</span><span style="color:#00007f;font-weight:bold">;</span> <span style="color:#0000ff">}</span>

<span style="color:#a0a0a0;font-style:italic">//&gt; Disable all mutable widgets</span>
info_ed_en <span style="color:#00007f;font-weight:bold">=</span> info_var_en <span style="color:#00007f;font-weight:bold">=</span> info_sp_en <span style="color:#00007f;font-weight:bold">=</span> info_out_en <span style="color:#00007f;font-weight:bold">=</span> up_en <span style="color:#00007f;font-weight:bold">=</span> upm_en <span style="color:#00007f;font-weight:bold">=</span> down_en <span style="color:#00007f;font-weight:bold">=</span> downm_en <span style="color:#00007f;font-weight:bold">=</span> 
    modCasc_en <span style="color:#00007f;font-weight:bold">=</span> pnl_pid_en <span style="color:#00007f;font-weight:bold">=</span> greed_text_en <span style="color:#00007f;font-weight:bold">=</span> greed_text1_en <span style="color:#00007f;font-weight:bold">=</span> greed_text2_en <span style="color:#00007f;font-weight:bold">=</span> greed_text3_en
    com_open_en <span style="color:#00007f;font-weight:bold">=</span> com_stop_en <span style="color:#00007f;font-weight:bold">=</span> com_close_en <span style="color:#00007f;font-weight:bold">=</span> st_open_en <span style="color:#00007f;font-weight:bold">=</span> st_close_en <span style="color:#00007f;font-weight:bold">=</span> Ramka_en <span style="color:#00007f;font-weight:bold">=</span> move_en

info_name_text <span style="color:#00007f;font-weight:bold">=</span> prmShifr.isEVal<span style="color:#0000ff">()</span> <span style="color:#00007f;font-weight:bold">?</span> <span style="color:#008000">""</span> <span style="color:#00007f;font-weight:bold">:</span> prmShifr<span style="color:#00007f;font-weight:bold">;</span></div>
</div>
<div class="a" style="left:897px;top:419px;width:16px;height:212px;background:#9db8c6"></div>
<div class="a" style="left:897px;top:460px;width:16px;height:140px;"></div>
<div class="a chk" style="left:897px;top:460px;width:16px;height:140px"></div>
<div class="a btn" style="left:897px;top:419px;width:16px;height:16px"></div>
<svg class="a" style="left:897px;top:419px" width="16" height="16"><path d="M3.5 10.0 L12.5 10.0 L8.0 5.5 Z" fill="#000"/></svg>
<div class="a hdl" style="left:897px;top:434px;width:16px;height:26px"></div>
<div class="a btn" style="left:897px;top:600px;width:16px;height:16px"></div>
<svg class="a" style="left:897px;top:600px" width="16" height="16"><path d="M3.5 10.0 L12.5 10.0 L8.0 5.5 Z" fill="#000"/></svg>
<div class="a btn" style="left:897px;top:615px;width:16px;height:16px"></div>
<svg class="a" style="left:897px;top:615px" width="16" height="16"><path d="M3.5 6.0 L12.5 6.0 L8.0 10.5 Z" fill="#000"/></svg>
<div class="a" style="left:280px;top:632px;width:617px;height:16px;background:#9db8c6"></div>
<div class="a chk" style="left:598px;top:632px;width:268px;height:16px"></div>
<div class="a btn" style="left:280px;top:632px;width:16px;height:16px"></div>
<svg class="a" style="left:280px;top:632px" width="16" height="16"><path d="M10.0 3.5 L10.0 12.5 L5.5 8.0 Z" fill="#000"/></svg>
<div class="a hdlh" style="left:297px;top:632px;width:301px;height:16px"></div>
<div class="a" style="left:439px;top:636px;width:1px;height:1px;background:#6c8494"></div>
<div class="a" style="left:440px;top:637px;width:1px;height:1px;background:#d0e2ec"></div>
<div class="a" style="left:443px;top:636px;width:1px;height:1px;background:#6c8494"></div>
<div class="a" style="left:444px;top:637px;width:1px;height:1px;background:#d0e2ec"></div>
<div class="a" style="left:447px;top:636px;width:1px;height:1px;background:#6c8494"></div>
<div class="a" style="left:448px;top:637px;width:1px;height:1px;background:#d0e2ec"></div>
<div class="a" style="left:451px;top:636px;width:1px;height:1px;background:#6c8494"></div>
<div class="a" style="left:452px;top:637px;width:1px;height:1px;background:#d0e2ec"></div>
<div class="a" style="left:455px;top:636px;width:1px;height:1px;background:#6c8494"></div>
<div class="a" style="left:456px;top:637px;width:1px;height:1px;background:#d0e2ec"></div>
<div class="a" style="left:439px;top:640px;width:1px;height:1px;background:#6c8494"></div>
<div class="a" style="left:440px;top:641px;width:1px;height:1px;background:#d0e2ec"></div>
<div class="a" style="left:443px;top:640px;width:1px;height:1px;background:#6c8494"></div>
<div class="a" style="left:444px;top:641px;width:1px;height:1px;background:#d0e2ec"></div>
<div class="a" style="left:447px;top:640px;width:1px;height:1px;background:#6c8494"></div>
<div class="a" style="left:448px;top:641px;width:1px;height:1px;background:#d0e2ec"></div>
<div class="a" style="left:451px;top:640px;width:1px;height:1px;background:#6c8494"></div>
<div class="a" style="left:452px;top:641px;width:1px;height:1px;background:#d0e2ec"></div>
<div class="a" style="left:455px;top:640px;width:1px;height:1px;background:#6c8494"></div>
<div class="a" style="left:456px;top:641px;width:1px;height:1px;background:#d0e2ec"></div>
<div class="a" style="left:439px;top:644px;width:1px;height:1px;background:#6c8494"></div>
<div class="a" style="left:440px;top:645px;width:1px;height:1px;background:#d0e2ec"></div>
<div class="a" style="left:443px;top:644px;width:1px;height:1px;background:#6c8494"></div>
<div class="a" style="left:444px;top:645px;width:1px;height:1px;background:#d0e2ec"></div>
<div class="a" style="left:447px;top:644px;width:1px;height:1px;background:#6c8494"></div>
<div class="a" style="left:448px;top:645px;width:1px;height:1px;background:#d0e2ec"></div>
<div class="a" style="left:451px;top:644px;width:1px;height:1px;background:#6c8494"></div>
<div class="a" style="left:452px;top:645px;width:1px;height:1px;background:#d0e2ec"></div>
<div class="a" style="left:455px;top:644px;width:1px;height:1px;background:#6c8494"></div>
<div class="a" style="left:456px;top:645px;width:1px;height:1px;background:#d0e2ec"></div>
<div class="a btn" style="left:866px;top:632px;width:16px;height:16px"></div>
<svg class="a" style="left:866px;top:632px" width="16" height="16"><path d="M10.0 3.5 L10.0 12.5 L5.5 8.0 Z" fill="#000"/></svg>
<div class="a btn" style="left:881px;top:632px;width:16px;height:16px"></div>
<svg class="a" style="left:881px;top:632px" width="16" height="16"><path d="M6.0 3.5 L6.0 12.5 L10.5 8.0 Z" fill="#000"/></svg>
<div class="a" style="left:897px;top:631px;width:16px;height:17px;background:#9db8c6"></div>
<div class="t" style="left:10px;top:689px;letter-spacing:-0.1px">/AGLKS/sub_UI/mod_VCAEngine/wlb_Main/wdg_ElCadr/%2fproc%2fattr</div>
<div class="a" style="left:861px;top:686px;width:16px;height:19px;border:1px solid #687f8e;border-radius:2px"></div>
<div class="a" style="left:863px;top:688px;width:12px;height:15px;background:#fff;border:1px solid #333"></div>
<svg class="a" style="left:863px;top:688px" width="12" height="15"><path d="M2.5 6.5 L9.5 6.5 L6 10 Z" fill="#000"/></svg>
<div class="a" style="left:881px;top:686px;width:8px;height:20px;border:1px solid #687f8e;border-radius:2px"></div>
<div class="a" style="left:883px;top:691px;font:bold 10px/13px 'Liberation Sans', sans-serif;color:#101830">*</div>
<div class="a" style="left:891px;top:686px;width:34px;height:20px;border:1px solid #687f8e;border-radius:2px"></div>
<div class="a" style="left:892px;top:689px;font:11px/13px 'Liberation Sans', sans-serif;color:#108a10">roman</div>
<svg class="a" style="left:933px;top:693px" width="14" height="14"><path d="M13.5 0.5 L0.5 13.5 M13.5 4.5 L4.5 13.5 M13.5 8.5 L8.5 13.5" stroke="#d8ecf6" stroke-width="1"/><path d="M13.5 1.5 L1.5 13.5 M13.5 5.5 L5.5 13.5 M13.5 9.5 L9.5 13.5" stroke="#6a8090" stroke-width="1"/></svg>
</body></html>
